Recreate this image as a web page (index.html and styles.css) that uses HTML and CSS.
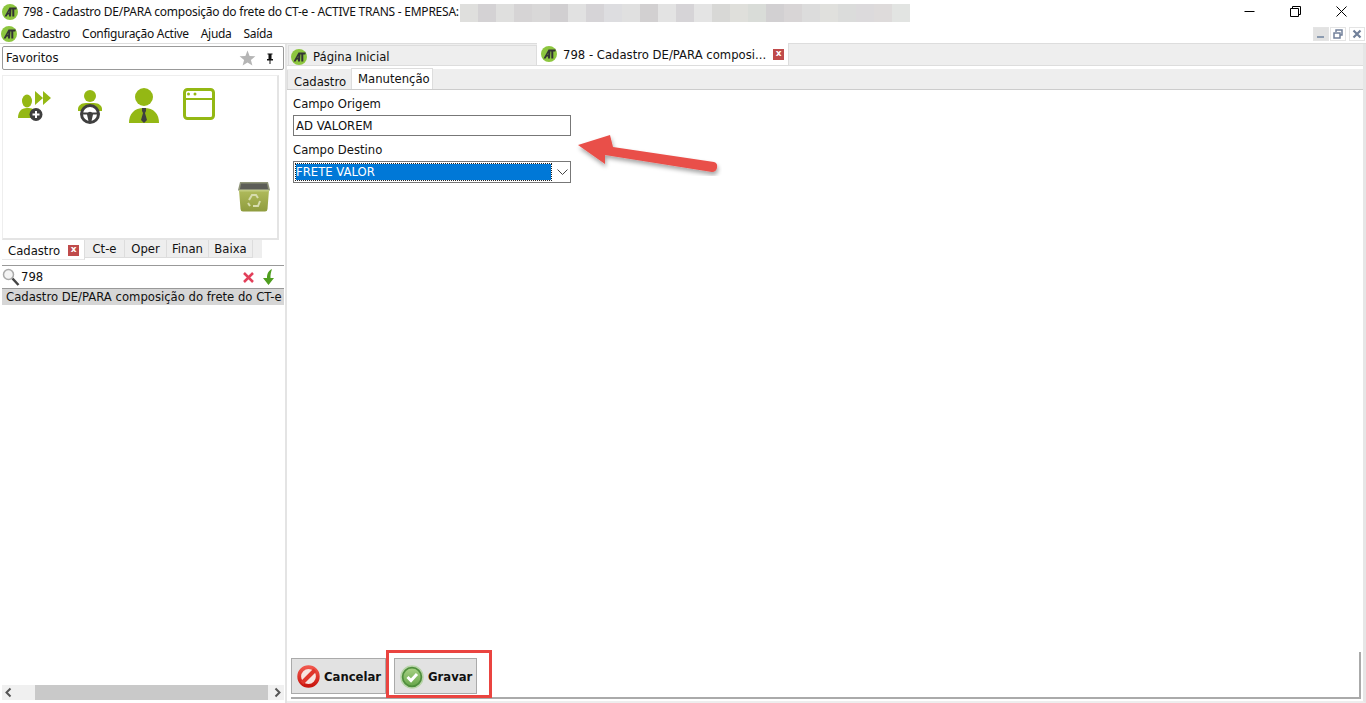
FILE: index.html
```html
<!DOCTYPE html>
<html lang="pt-BR">
<head>
  <meta charset="UTF-8">
  <title>798 - Cadastro DE/PARA composição do frete do CT-e</title>
  <link rel="stylesheet" href="styles.css">
</head>
<body>
  <svg class="defs" width="0" height="0">
    <defs>
      <linearGradient id="redRing" x1="0" y1="0" x2="0" y2="1">
        <stop offset="0" stop-color="#f0564c"/>
        <stop offset="1" stop-color="#c9170f"/>
      </linearGradient>
      <linearGradient id="greenDisc" x1="0" y1="0" x2="0" y2="1">
        <stop offset="0" stop-color="#a6d083"/>
        <stop offset="1" stop-color="#69a84c"/>
      </linearGradient>
      <linearGradient id="binBody" x1="0" y1="0" x2="0" y2="1">
        <stop offset="0" stop-color="#b0bb5c"/>
        <stop offset="1" stop-color="#8f9c3e"/>
      </linearGradient>
      <filter id="shade"><feDropShadow dx="1" dy="3" stdDeviation="2" flood-color="#000" flood-opacity=".35"/></filter>
    </defs>
    <symbol id="logo" viewBox="0 0 16 16">
      <circle cx="8" cy="8" r="8" fill="#8dc63f"/>
      <path d="M2.500 12.500L7.500 3.500H9.500L9 12.500H7V10.500H5.800L4.600 12.500ZM7.200 6.800L6.400 8.700H7.200ZM9.500 3.500H14.800L14.300 5.500H12.300V12.500H10.300V5.500H9.500Z" fill="#333"/>
    </symbol>
  </svg>

  <div class="titlebar">
    <svg class="logo"><use href="#logo"/></svg>
    <span class="title">798 - Cadastro DE/PARA composição do frete do CT-e - ACTIVE TRANS - EMPRESA:</span>
    <div class="blur">
      <i style="background:#dfdfdd"></i><i style="background:#d4d2d4"></i><i style="background:#dfdfde"></i><i style="background:#d6d4d5"></i><i style="background:#d9d8d8"></i><i style="background:#d1cfd1"></i><i style="background:#e1e1e1"></i><i style="background:#d6d4d7"></i><i style="background:#dddde0"></i><i style="background:#e0e0e0"></i><i style="background:#d2d0d1"></i><i style="background:#e3e3e3"></i><i style="background:#d6d4d7"></i><i style="background:#e4e4e4"></i><i style="background:#d8d8d6"></i><i style="background:#dfdfdb"></i><i style="background:#d9dcd8"></i><i style="background:#d2d0d2"></i><i style="background:#d8d5d6"></i><i style="background:#dcdcdc"></i><i style="background:#e0e0dd"></i><i style="background:#dbdcdb"></i><i style="background:#dcdadc"></i><i style="background:#dedbdb"></i><i style="background:#e2e4e2"></i>
    </div>
    <div class="win-btns">
      <svg width="11" height="11" viewBox="0 0 11 11"><path d="M0.500 5.500H10.500" stroke="#000"/></svg>
      <svg width="11" height="11" viewBox="0 0 11 11" fill="none" stroke="#000"><path d="M0.500 2.500H8.500V10.500H0.500Z M2.500 2.500V0.500H10.500V8.500H8.500"/></svg>
      <svg width="11" height="11" viewBox="0 0 11 11" stroke="#000"><path d="M0.500 0.500L10.500 10.500M10.500 0.500L0.500 10.500"/></svg>
    </div>
  </div>

  <div class="menubar">
    <svg class="logo"><use href="#logo"/></svg>
    <span>Cadastro</span>
    <span>Configuração Active</span>
    <span>Ajuda</span>
    <span>Saída</span>
    <div class="mdi-btns">
      <b class="mdi hot"><svg width="10" height="10" viewBox="0 0 10 10"><path d="M1 7H8V9H1Z" fill="#8c9bb0"/></svg></b>
      <b class="mdi"><svg width="10" height="10" viewBox="0 0 10 10" fill="none" stroke="#71809a" stroke-width="1.500"><path d="M1 4H7V9H1Z M3 3V1H9V6H7"/></svg></b>
      <b class="mdi"><svg width="10" height="10" viewBox="0 0 10 10" stroke="#71809a" stroke-width="2.200"><path d="M1.500 1.500L8.500 8.500M8.500 1.500L1.500 8.500"/></svg></b>
    </div>
  </div>

  <div class="main">
    <aside class="sidebar">
      <div class="fav-box">
        <span>Favoritos</span>
        <svg class="star" width="17" height="16" viewBox="0 0 17 16"><path d="M8.500 0.500L10.600 5.900L16.400 6.200L11.900 9.900L13.400 15.500L8.500 12.400L3.600 15.500L5.100 9.900L0.600 6.200L6.400 5.900Z" fill="#b5b5b5"/></svg>
        <svg class="pin" width="8" height="11" viewBox="0 0 8 11"><path d="M1.500 0.500H6.500V1.500H5.500V6H7V7.500H4.500V11H3.500V7.500H1V6H2.500V1.500H1.500Z" fill="#111"/></svg>
      </div>

      <div class="shortcuts">
        <div class="shortcut-row">
          <svg class="sc-add" width="34" height="32" viewBox="0 0 34 32">
            <path d="M17 1L25 8L17 15Z M25 1L33 8L25 15Z" fill="#94b814"/>
            <ellipse cx="9" cy="11" rx="5" ry="6.500" fill="#94b814"/>
            <path d="M0 28C0 22 3 18 9 18C14 18 17 19 18 22L14 28Z" fill="#94b814"/>
            <circle cx="18" cy="24.500" r="6.500" fill="#3f3f3f"/>
            <path d="M14.500 23.500H17V21H19V23.500H21.500V25.500H19V28H17V25.500H14.500Z" fill="#fff"/>
          </svg>
          <svg class="sc-driver" width="24" height="34" viewBox="0 0 24 34">
            <circle cx="12" cy="6" r="6" fill="#94b814"/>
            <path d="M0 19C0 16 3 13 8 13H16C21 13 24 16 24 19V21H0Z" fill="#94b814"/>
            <circle cx="12" cy="24" r="8.500" fill="#fff" stroke="#3f3f3f" stroke-width="3"/>
            <circle cx="12" cy="24" r="2.200" fill="#3f3f3f"/>
            <path d="M4 22.500H20V24.500H15L13.500 31H10.500L9 24.500H4Z" fill="#3f3f3f"/>
          </svg>
          <svg class="sc-person" width="32" height="36" viewBox="0 0 32 36">
            <circle cx="16" cy="9" r="9" fill="#94b814"/>
            <path d="M1 35C1 26 6 20 16 20C26 20 31 26 31 35Z" fill="#94b814"/>
            <path d="M14 20H18V23L17 25L19 32L16 35L13 32L15 25L14 23Z" fill="#3f3f3f"/>
          </svg>
          <svg class="sc-window" width="32" height="32" viewBox="0 0 32 32">
            <rect x="1.500" y="1.500" width="29" height="29" rx="3" fill="none" stroke="#94b814" stroke-width="3"/>
            <rect x="1.500" y="10" width="29" height="2" fill="#94b814"/>
            <circle cx="5.500" cy="6" r="1.500" fill="#94b814"/>
            <circle cx="12" cy="6" r="1.500" fill="#94b814"/>
          </svg>
        </div>
        <svg class="trash" width="32" height="31" viewBox="0 0 32 31">
          <path d="M2 1H30L32 9L30 11H2L0 9Z" fill="#8f9478"/>
          <path d="M3 2.500H29L30 8H2Z" fill="#5c5d57"/>
          <path d="M1 9H31L29.500 28Q29.400 30.500 27 30.500H5Q2.600 30.500 2.500 28Z" fill="url(#binBody)"/>
          <path d="M1 9H31V10.500H1Z" fill="#c1cb7d"/>
          <g fill="none" stroke="#d7dcae" stroke-width="2">
            <path d="M11 19L14 14H18L20 17"/>
            <path d="M22 20L20 25H15"/>
            <path d="M10 22L12 25"/>
          </g>
        </svg>
      </div>

      <div class="side-tabs">
        <div class="side-tab active">Cadastro <b class="close-x">x</b></div>
        <div class="side-tab w-cte">Ct-e</div>
        <div class="side-tab w-oper">Oper</div>
        <div class="side-tab w-finan">Finan</div>
        <div class="side-tab w-baixa">Baixa</div>
      </div>

      <div class="search">
        <svg width="18" height="19" viewBox="0 0 18 19">
          <circle cx="6.500" cy="6.500" r="5" fill="#f4f4f4" stroke="#aaa" stroke-width="1.500"/>
          <path d="M10.500 10.500L16.500 17" stroke="#444" stroke-width="2.500"/>
        </svg>
        <span class="search-text">798</span>
        <svg class="search-x" width="11" height="11" viewBox="0 0 11 11"><path d="M1 1L10 10M10 1L1 10" stroke="#e2405a" stroke-width="2.500"/></svg>
        <svg width="12" height="16" viewBox="0 0 12 16"><path d="M10 0C6 2 5 5 5 9H1L6.500 16L12 9H8.500C8.300 6 9 3 10 0Z" fill="#4f9e1f"/></svg>
      </div>
      <div class="result-row">Cadastro DE/PARA composição do frete do CT-e</div>

      <div class="h-scroll">
        <svg width="12" height="15" viewBox="0 0 12 15"><path d="M8.500 3.500L4.500 7.500L8.500 11.500" fill="none" stroke="#555" stroke-width="2"/></svg>
        <div class="h-thumb"></div>
        <svg width="12" height="15" viewBox="0 0 12 15"><path d="M3.500 3.500L7.500 7.500L3.500 11.500" fill="none" stroke="#555" stroke-width="2"/></svg>
      </div>
    </aside>

    <section class="content">
      <div class="doc-tabs">
        <div class="doc-tab home"><svg class="logo"><use href="#logo"/></svg>Página Inicial</div>
        <div class="doc-tab current"><svg class="logo"><use href="#logo"/></svg>798 - Cadastro DE/PARA composi... <b class="close-x">x</b></div>
      </div>

      <div class="form-tabs">
        <div class="form-tab">Cadastro</div>
        <div class="form-tab active">Manutenção</div>
      </div>

      <div class="form-body">
        <label class="field-label">Campo Origem</label>
        <div class="text-input">AD VALOREM</div>
        <label class="field-label second">Campo Destino</label>
        <div class="select-input">
          <span class="selected">FRETE VALOR</span>
          <svg width="11" height="6" viewBox="0 0 11 6"><path d="M0.500 0.500L5.500 5.500L10.500 0.500" fill="none" stroke="#444"/></svg>
        </div>
      </div>

      <div class="actions">
        <button class="btn cancel">
          <svg width="23" height="23" viewBox="0 0 23 23">
            <circle cx="11.500" cy="11.500" r="9.300" fill="#f7e4e0" stroke="url(#redRing)" stroke-width="3.800"/>
            <path d="M5 18L18 5" stroke="#e0352b" stroke-width="4"/>
          </svg>
          Cancelar
        </button>
        <button class="btn save">
          <svg width="24" height="24" viewBox="0 0 24 24">
            <circle cx="12" cy="12" r="11" fill="#4f8f3c" stroke="#b9d5aa" stroke-width="1.500"/>
            <circle cx="12" cy="12" r="8.500" fill="url(#greenDisc)"/>
            <path d="M7.500 12L11 15.500L17 9" fill="none" stroke="#fff" stroke-width="3"/>
          </svg>
          Gravar
        </button>
      </div>

      <div class="mark-box"></div>
      <svg class="mark-arrow" width="146" height="50" viewBox="0 0 146 50">
        <path d="M2 15L34 5L37 17L138 32Q142 33 141 38Q140 42 136 42L29 25L29 34Z" fill="#e94f4a" filter="url(#shade)"/>
      </svg>
    </section>
  </div>
</body>
</html>
```

FILE: styles.css
```css
* {
  box-sizing: border-box;
}
html, body {
  height: 100%;
  margin: 0;
}
body {
  font-family: "DejaVu Sans", sans-serif;
  font-size: 11.65px;
  color: #111;
  background-color: #fff;
  overflow: hidden;
  display: flex;
  flex-direction: column;
}
.defs {
  position: absolute;
}
.logo {
  width: 16px;
  height: 16px;
  flex: none;
}

/* window title */
.titlebar {
  height: 24px;
  display: flex;
  align-items: center;
  padding: 0 0 1px 2px;
  font-family: "Noto Sans", sans-serif;
  font-size: 12px;
}
.title {
  margin-left: 5px;
  width: 437px;
  white-space: nowrap;
  letter-spacing: -0.24px;
}
.blur {
  display: flex;
  height: 18px;
  width: 450px;
  margin-top: 3px;
}
.blur i {
  flex: 1;
}
.win-btns {
  margin-left: auto;
  display: flex;
  gap: 35px;
  padding-right: 19px;
}

/* menu */
.menubar {
  height: 19px;
  display: flex;
  align-items: center;
  gap: 12px;
  padding-left: 1px;
  font-family: "Noto Sans", sans-serif;
  font-size: 12px;
  letter-spacing: -0.3px;
}
.menubar .logo {
  margin-right: -7px;
}
.mdi-btns {
  margin-left: auto;
  display: flex;
  gap: 1px;
  padding-right: 1px;
}
.mdi {
  width: 16px;
  height: 14px;
  border: 1px solid #e4e4e4;
  display: flex;
  align-items: center;
  justify-content: center;
}
.mdi:last-child {
  margin-left: 2px;
}
.mdi.hot {
  background-color: #e2e2e2;
}

.main {
  flex: 1;
  display: flex;
  min-height: 0;
  border-top: 1px solid #ddd;
}

/* left panel */
.sidebar {
  width: 287px;
  flex: none;
  display: flex;
  flex-direction: column;
  padding: 2px 0 3px 2px;
  border-right: 2px solid #e4e4e4;
}
.fav-box {
  width: 282px;
  height: 24px;
  border: 1px solid #999;
  border-radius: 2px;
  display: flex;
  align-items: center;
  padding: 0 3px;
}
.fav-box span {
  flex: 1;
}
.star {
  margin-right: 1px;
}
.pin {
  margin: 0 6px 0 9px;
}
.shortcuts {
  width: 277px;
  height: 165px;
  flex: none;
  margin-top: 5px;
  border: 1px solid #eee;
  border-right: 2px solid #e4e4e4;
  border-bottom: 2px solid #e4e4e4;
  position: relative;
}
.shortcut-row {
  display: flex;
  align-items: flex-start;
  padding: 12px 0 0 15px;
  gap: 26px;
}
.sc-add,
.sc-driver {
  margin-top: 2px;
}
.sc-window {
  margin-left: -3px;
}
.trash {
  position: absolute;
  right: 7px;
  bottom: 26px;
}
.side-tabs {
  display: flex;
  flex: none;
  height: 19px;
  width: 260px;
  margin-top: -1px;
  background-color: #eee;
}
.side-tab {
  border-right: 1px solid #ddd;
  border-bottom: 1px solid #ddd;
  display: flex;
  align-items: center;
  justify-content: center;
  padding-top: 2px;
}
.side-tab.active {
  width: 83px;
  height: 21px;
  background-color: #fff;
  border-bottom: 1px solid #e8e8e8;
  justify-content: flex-start;
  padding: 3px 0 0 6px;
  gap: 8px;
}
.side-tab.active .close-x {
  margin-top: -1px;
}
.w-cte { width: 40px; }
.w-oper { width: 42px; }
.w-finan { width: 42px; }
.w-baixa { width: 44px; }
.close-x {
  width: 11px;
  height: 11px;
  background-color: #c04b4b;
  color: #fff;
  font-size: 9px;
  line-height: 9px;
  text-align: center;
  flex: none;
}
.search {
  margin-top: 7px;
  height: 24px;
  width: 282px;
  flex: none;
  border-top: 1px solid #999;
  border-bottom: 1px solid #999;
  display: flex;
  align-items: center;
  padding-right: 10px;
}
.search-text {
  flex: 1;
  margin-left: 1px;
}
.search-x {
  margin-right: 8px;
}
.result-row {
  width: 282px;
  height: 16px;
  flex: none;
  line-height: 16px;
  background-color: #d6d6d6;
  padding-left: 4px;
  white-space: nowrap;
}
.h-scroll {
  margin-top: auto;
  width: 282px;
  height: 15px;
  flex: none;
  background-color: #f0f0f0;
  display: flex;
  align-items: center;
}
.h-thumb {
  width: 233px;
  height: 15px;
  margin-left: 21px;
  margin-right: 4px;
  background-color: #c9c9c9;
}

/* right side */
.content {
  flex: 1;
  min-width: 0;
  display: flex;
  flex-direction: column;
  position: relative;
  border-right: 3px solid #e6e6e6;
  border-bottom: 2px solid #eee;
}
.doc-tabs {
  height: 22px;
  display: flex;
  align-items: flex-end;
  background-color: #eee;
  border-bottom: 1px solid #ddd;
  padding-left: 1px;
}
.doc-tab {
  display: flex;
  align-items: center;
  gap: 6px;
  padding-left: 3px;
  white-space: nowrap;
}
.doc-tab.home {
  width: 249px;
  height: 20px;
  border: 1px solid #ddd;
  border-bottom: 0;
  padding: 2px 0 0 2px;
}
.doc-tab.current {
  width: 252px;
  height: 22px;
  background-color: #fff;
  border-right: 1px solid #ddd;
  padding: 1px 0 0 4px;
}
.doc-tab.current .logo {
  margin-top: -1px;
}
.doc-tab.current .close-x {
  margin-left: 1px;
}
.form-tabs {
  margin-top: 3px;
  height: 21px;
  display: flex;
  align-items: flex-end;
  background-color: #eee;
  border-bottom: 1px solid #ccc;
}
.form-tab {
  width: 64px;
  height: 19px;
  padding: 5px 0 0 6px;
  border-left: 1px solid #ddd;
}
.form-tab.active {
  width: 82px;
  height: 21px;
  padding-top: 3px;
  background-color: #fff;
  border: 1px solid #ddd;
  border-bottom: 0;
}
.form-body {
  flex: 1;
  padding: 7px 0 0 6px;
}
.field-label {
  display: block;
  height: 13px;
  line-height: 14px;
}
.field-label.second {
  margin-top: 7px;
}
.text-input,
.select-input {
  width: 278px;
  border: 1px solid #777;
  margin-top: 5px;
}
.text-input {
  height: 21px;
  line-height: 20px;
  padding-left: 2px;
}
.select-input {
  height: 22px;
  display: flex;
  align-items: center;
  padding: 2px 0 2px 2px;
}
.selected {
  width: 255px;
  height: 16px;
  line-height: 17px;
  background-color: #0078d7;
  color: #fff;
  outline: 1px dotted #222;
  margin-right: 6px;
}
.actions {
  height: 47px;
  margin: 0 2px 2px 4px;
  padding-top: 6px;
  display: flex;
  gap: 8px;
  border-right: 2px solid #aaa;
  border-bottom: 2px solid #aaa;
  align-items: flex-start;
}
.btn {
  height: 36px;
  display: flex;
  align-items: center;
  gap: 4px;
  padding: 1px 0 0 5px;
  background-color: #e2e2e2;
  border: 1px solid #aaa;
  font-family: "DejaVu Sans", sans-serif;
  font-size: 11.65px;
  font-weight: bold;
  color: #111;
}
.btn.cancel { width: 95px; }
.btn.save { width: 83px; }

/* annotations drawn over the screenshot */
.mark-box {
  position: absolute;
  left: 99px;
  bottom: 3px;
  width: 106px;
  height: 48px;
  border: 3px solid #ea4440;
}
.mark-arrow {
  position: absolute;
  left: 289px;
  top: 86px;
}
```
